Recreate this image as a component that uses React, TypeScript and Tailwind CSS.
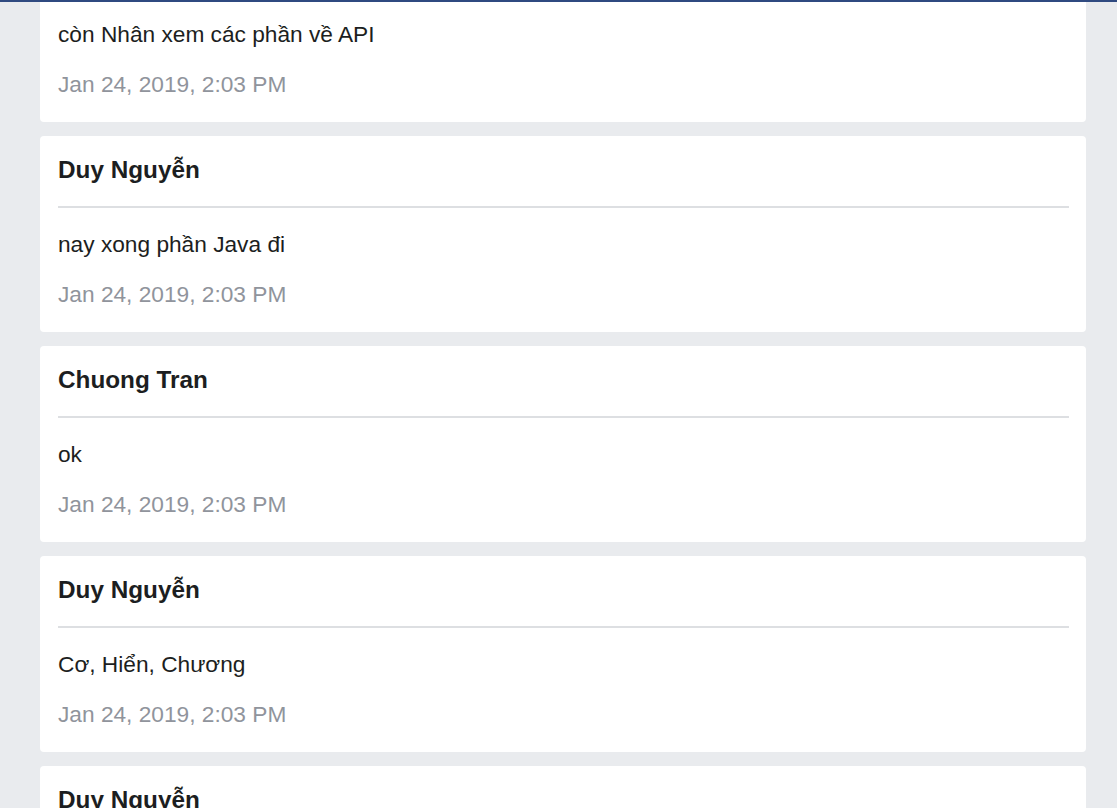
import React from "react";

type Message = {
  author?: string;
  text: string;
  time: string;
};

const messages: Message[] = [
  { author: "Chuong Tran", text: "còn Nhân xem các phần về API", time: "Jan 24, 2019, 2:03 PM" },
  { author: "Duy Nguyễn", text: "nay xong phần Java đi", time: "Jan 24, 2019, 2:03 PM" },
  { author: "Chuong Tran", text: "ok", time: "Jan 24, 2019, 2:03 PM" },
  { author: "Duy Nguyễn", text: "Cơ, Hiển, Chương", time: "Jan 24, 2019, 2:03 PM" },
  { author: "Duy Nguyễn", text: "ok", time: "Jan 24, 2019, 2:03 PM" },
];

export default function App() {
  return (
    <div className="h-[808px] w-full overflow-hidden bg-[#e9ebee] flex flex-col font-['Liberation_Sans',Arial,sans-serif]">
      <div className="h-[2px] w-full shrink-0 bg-[#2f4a80]" />
      <div className="flex-1 overflow-hidden">
        <div className="ml-[40px] w-[1046px] -mt-[76px] flex flex-col gap-[14px]">
          {messages.map((m, i) => (
            <MessageCard key={i} {...m} />
          ))}
        </div>
      </div>
    </div>
  );
}

const MessageCard = ({ author, text, time }: Message) => {
  return (
    <div className="bg-white rounded-[4px] pt-[19px] pb-[25px] pl-[18px] pr-[17px]">
      <div className="text-[24.3px] leading-[30px] font-bold text-[#1c1e21] pb-[21px] border-b-2 border-[#dddfe2]">
        {author}
      </div>
      <p className="mt-[23px] text-[22.7px] leading-[26px] text-[#1c1e21]">{text}</p>
      <p className="mt-[24px] text-[22.7px] leading-[26px] text-[#90949c]">{time}</p>
    </div>
  );
};
